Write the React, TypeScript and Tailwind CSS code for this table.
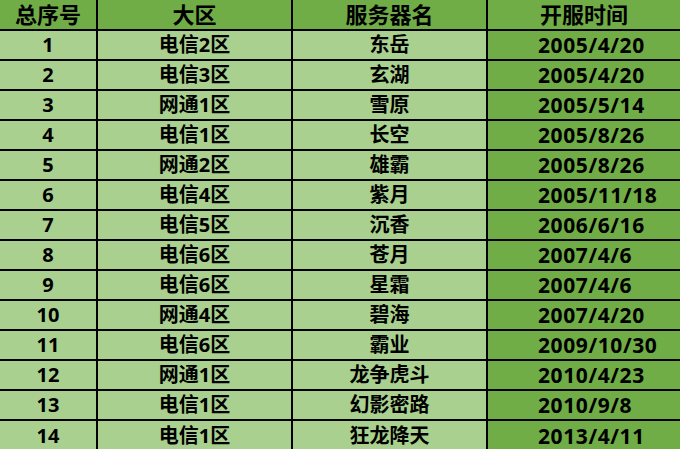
import React from "react";

const rows: [string, string, string, string][] = [
  ["1", "电信2区", "东岳", "2005/4/20"],
  ["2", "电信3区", "玄湖", "2005/4/20"],
  ["3", "网通1区", "雪原", "2005/5/14"],
  ["4", "电信1区", "长空", "2005/8/26"],
  ["5", "网通2区", "雄霸", "2005/8/26"],
  ["6", "电信4区", "紫月", "2005/11/18"],
  ["7", "电信5区", "沉香", "2006/6/16"],
  ["8", "电信6区", "苍月", "2007/4/6"],
  ["9", "电信6区", "星霜", "2007/4/6"],
  ["10", "网通4区", "碧海", "2007/4/20"],
  ["11", "电信6区", "霸业", "2009/10/30"],
  ["12", "网通1区", "龙争虎斗", "2010/4/23"],
  ["13", "电信1区", "幻影密路", "2010/9/8"],
  ["14", "电信1区", "狂龙降天", "2013/4/11"],
];

export default function App() {
  return (
    <div
      className="w-[680px] h-[449px] overflow-hidden bg-[#A9D08E] text-black font-bold"
      style={{ fontFamily: '"Open Sans", "Noto Sans CJK SC", sans-serif' }}
    >
      <div className="grid grid-cols-[98px_195px_195px_192px] h-[31px] bg-[#70AD47] border-b-2 border-black text-[22px] leading-[26px]">
        <div className="flex items-center justify-center border-r-2 border-black pb-[2px]">总序号</div>
        <div className="flex items-center justify-center border-r-2 border-black pb-[2px]">大区</div>
        <div className="flex items-center justify-center border-r-2 border-black pb-[2px]">服务器名</div>
        <div className="flex items-center justify-center pb-[2px]">开服时间</div>
      </div>
      {rows.map((r, i) => (
        <div
          key={i}
          className={
            "grid grid-cols-[98px_195px_195px_192px] h-[30px] text-[20px] leading-[24px] " +
            (i < rows.length - 1 ? "border-b-2 border-black" : "")
          }
        >
          <div className="flex items-center justify-center border-r-2 border-black">{r[0]}</div>
          <div className="flex items-center justify-center border-r-2 border-black">{r[1]}</div>
          <div className="flex items-center justify-center border-r-2 border-black">{r[2]}</div>
          <div className="flex items-center pl-[50px] bg-[#70AD47] text-[21px] tracking-[0.6px]">{r[3]}</div>
        </div>
      ))}
    </div>
  );
}
